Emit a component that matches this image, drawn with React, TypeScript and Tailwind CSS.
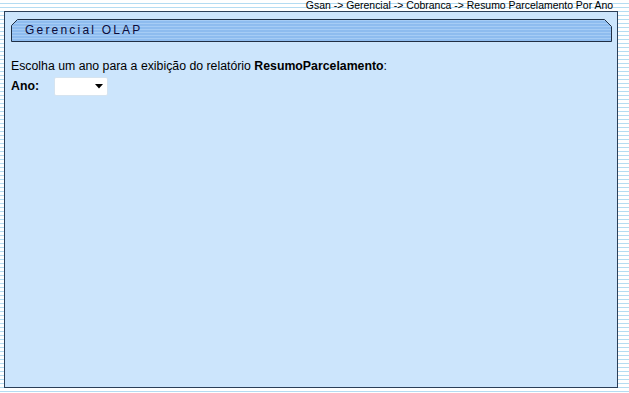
import React from 'react';

const stripes = {
  backgroundImage: 'repeating-linear-gradient(to bottom, #ffffff 0px, #ffffff 3px, #b4dcf2 3px, #b4dcf2 4px)',
};

export default function App() {
  return (
    <div className="w-[629px] h-[393px] relative overflow-hidden" style={stripes}>
      {/* Breadcrumb */}
      <div className="h-[11px] flex justify-end pr-[16px] text-[10.45px] leading-[11px] text-black font-['Liberation_Sans',Arial,sans-serif]">
        Gsan -&gt; Gerencial -&gt; Cobranca -&gt; Resumo Parcelamento Por Ano
      </div>

      {/* Main panel */}
      <div className="ml-[4px] w-[614px] h-[377px] bg-[#cce5fc] border border-[#2b3f58] px-[6px] pt-[6px] font-['Liberation_Sans',Arial,sans-serif]">
        {/* Tab header */}
        <div className="relative w-[601px] h-[24px] flex items-center pl-[14px]">
          <svg className="absolute inset-0" width="601" height="24" viewBox="0 0 601 24">
            <defs>
              <pattern id="tabp" width="4" height="3" patternUnits="userSpaceOnUse">
                <rect width="4" height="3" fill="#8ebcef" />
                <rect y="2" width="4" height="1" fill="#a6ccf5" />
              </pattern>
            </defs>
            <path
              d="M0.5 23.5 L0.5 7.5 L6.5 1.5 L593.5 1.5 L600.5 8.5 L600.5 23.5 Z"
              fill="url(#tabp)"
              stroke="#1f2f45"
              strokeWidth="1"
            />
          </svg>
          <span className="relative text-[12px] tracking-[2.2px] text-[#0b0b3a]">
            Gerencial OLAP
          </span>
        </div>

        {/* Content */}
        <div className="mt-[17px] text-[12.3px] leading-[14px] text-black">
          Escolha um ano para a exibição do relatório <b>ResumoParcelamento</b>:
        </div>
        <div className="mt-[3px] flex items-center h-[20px]">
          <span className="w-[43px] text-[12.3px] font-bold text-black">Ano:</span>
          <div className="w-[54px] h-[19px] bg-white border border-[#d6e4f0] rounded-[2px] flex items-center justify-end pr-[4px]">
            <svg width="8" height="5" viewBox="0 0 8 5">
              <path d="M0 0 L8 0 L4 4.5 Z" fill="#000" />
            </svg>
          </div>
        </div>
      </div>
    </div>
  );
}
